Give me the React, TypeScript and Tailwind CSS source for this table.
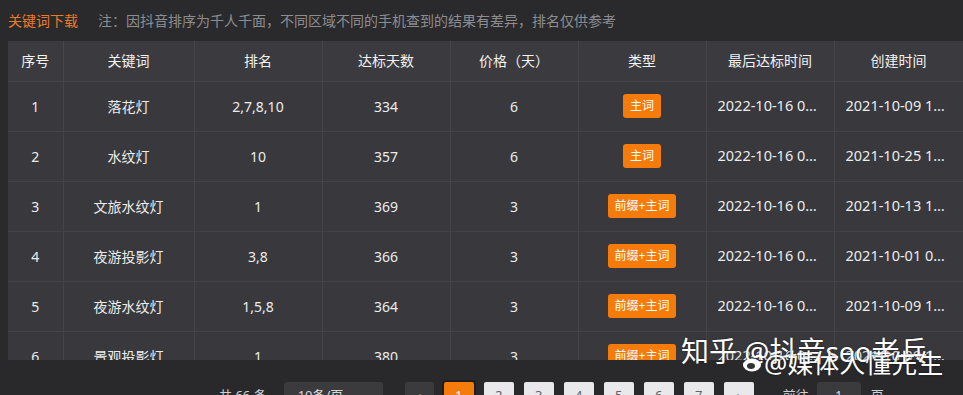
import React from "react";

const cols = [55, 131, 128, 128, 128, 128, 128, 129];
const headers = ["序号", "关键词", "排名", "达标天数", "价格（天）", "类型", "最后达标时间", "创建时间"];
const rows = [
  ["1", "落花灯", "2,7,8,10", "334", "6", "主词", "2022-10-16 00:00:00", "2021-10-09 11:20:00"],
  ["2", "水纹灯", "10", "357", "6", "主词", "2022-10-16 00:00:00", "2021-10-25 10:20:00"],
  ["3", "文旅水纹灯", "1", "369", "3", "前缀+主词", "2022-10-16 00:00:00", "2021-10-13 11:20:00"],
  ["4", "夜游投影灯", "3,8", "366", "3", "前缀+主词", "2022-10-16 00:00:00", "2021-10-01 09:20:00"],
  ["5", "夜游水纹灯", "1,5,8", "364", "3", "前缀+主词", "2022-10-16 00:00:00", "2021-10-09 10:20:00"],
  ["6", "景观投影灯", "1", "380", "3", "前缀+主词", "2022-10-16 00:00:00", "2021-10-09 11:20:00"],
];

const font = { fontFamily: '"Noto Sans", "Noto Sans CJK SC", sans-serif' };

export default function App() {
  return (
    <div className="relative w-[963px] h-[395px] overflow-hidden bg-[#2a2a2d] text-[#e6e6e6]" style={font}>
      <div className="h-[41px] flex items-center pl-[8px] text-[14px]">
        <span className="text-[#ea7a2a]">关键词下载</span>
        <span className="ml-[20px] text-[#8d8d90]">注：因抖音排序为千人千面，不同区域不同的手机查到的结果有差异，排名仅供参考</span>
      </div>
      <div className="ml-[8px] h-[319px] overflow-hidden bg-[#3a3a3e]">
        <table className="table-fixed border-collapse w-[955px] text-[14px]">
          <colgroup>
            {cols.map((w, i) => (
              <col key={i} style={{ width: w }} />
            ))}
          </colgroup>
          <thead>
            <tr className="h-[40px] bg-[#3b3b3f]">
              {headers.map((h, i) => (
                <th key={i} className="font-normal text-[#f2f2f2] border-r border-b border-[#47474b] text-center">
                  {h}
                </th>
              ))}
            </tr>
          </thead>
          <tbody>
            {rows.map((r, ri) => (
              <tr key={ri} className="h-[50px] bg-[#39393d]">
                {r.map((c, ci) => (
                  <td
                    key={ci}
                    className={
                      "border-r border-b border-[#444448] text-[#ececec] " +
                      (ci >= 6 ? "pl-[11px] pr-[11px] text-left text-[14.5px]" : "text-center")
                    }
                  >
                    {ci === 5 ? (
                      <span className="inline-flex items-center h-[24px] px-[7px] rounded-[3px] bg-[#f57b0a] text-white text-[12px]">
                        {c}
                      </span>
                    ) : ci >= 6 ? (
                      <div className="truncate">{c}</div>
                    ) : (
                      c
                    )}
                  </td>
                ))}
              </tr>
            ))}
          </tbody>
        </table>
      </div>
      <div className="h-[35px] bg-[#29292c] flex items-start pt-[22px] text-[13px]">
        <span className="ml-[219px] mt-[4px] text-[#d0d0d0]">共 66 条</span>
        <div className="ml-[17px] w-[99px] h-[28px] rounded-[3px] bg-[#3b3b3e] flex items-center px-[14px] justify-between text-[#d8d8d8]">
          <span>10条/页</span>
          <span className="text-[#888] text-[10px]">⌄</span>
        </div>
        <div className="ml-[22px] w-[29px] h-[28px] rounded-[2px] bg-[#3b3b3e] flex items-center justify-center text-[#aaa]">‹</div>
        <div className="ml-[10px] w-[30px] h-[28px] rounded-[2px] bg-[#f57b0a] ring-2 ring-[#1e1e20] flex items-center justify-center text-white">1</div>
        {["2", "3", "4", "5", "6", "7"].map((p) => (
          <div key={p} className="ml-[10px] w-[30px] h-[28px] rounded-[2px] bg-[#e9e9eb] flex items-center justify-center text-[#606266]">
            {p}
          </div>
        ))}
        <div className="ml-[10px] w-[30px] h-[28px] rounded-[2px] bg-[#e9e9eb] flex items-center justify-center text-[#606266]">›</div>
        <span className="ml-[29px] mt-[4px] text-[#d0d0d0]">前往</span>
        <div className="ml-[8px] w-[44px] h-[28px] rounded-[3px] bg-[#3b3b3e] flex items-center justify-center text-[#d8d8d8]">1</div>
        <span className="ml-[10px] mt-[4px] text-[#d0d0d0]">页</span>
      </div>

      <div className="absolute left-[681px] top-[333px] text-[28px] leading-[36px] text-white whitespace-nowrap [text-shadow:0_0_2px_rgba(0,0,0,0.6)]">
        知乎 @抖音seo老兵
      </div>
      <div className="absolute left-[742px] top-[348px] flex items-center whitespace-nowrap text-white [text-shadow:0_0_2px_rgba(0,0,0,0.6)]">
        <svg width="22" height="20" viewBox="0 0 22 20">
          <ellipse cx="10" cy="12" rx="9" ry="6.5" fill="white" />
          <ellipse cx="9" cy="13" rx="4" ry="3" fill="#333" />
          <path d="M14 3 Q19 2 20 7" stroke="white" strokeWidth="2" fill="none" />
        </svg>
        <span className="text-[26px] leading-[30px]">@媒体人懂先生</span>
      </div>
    </div>
  );
}
